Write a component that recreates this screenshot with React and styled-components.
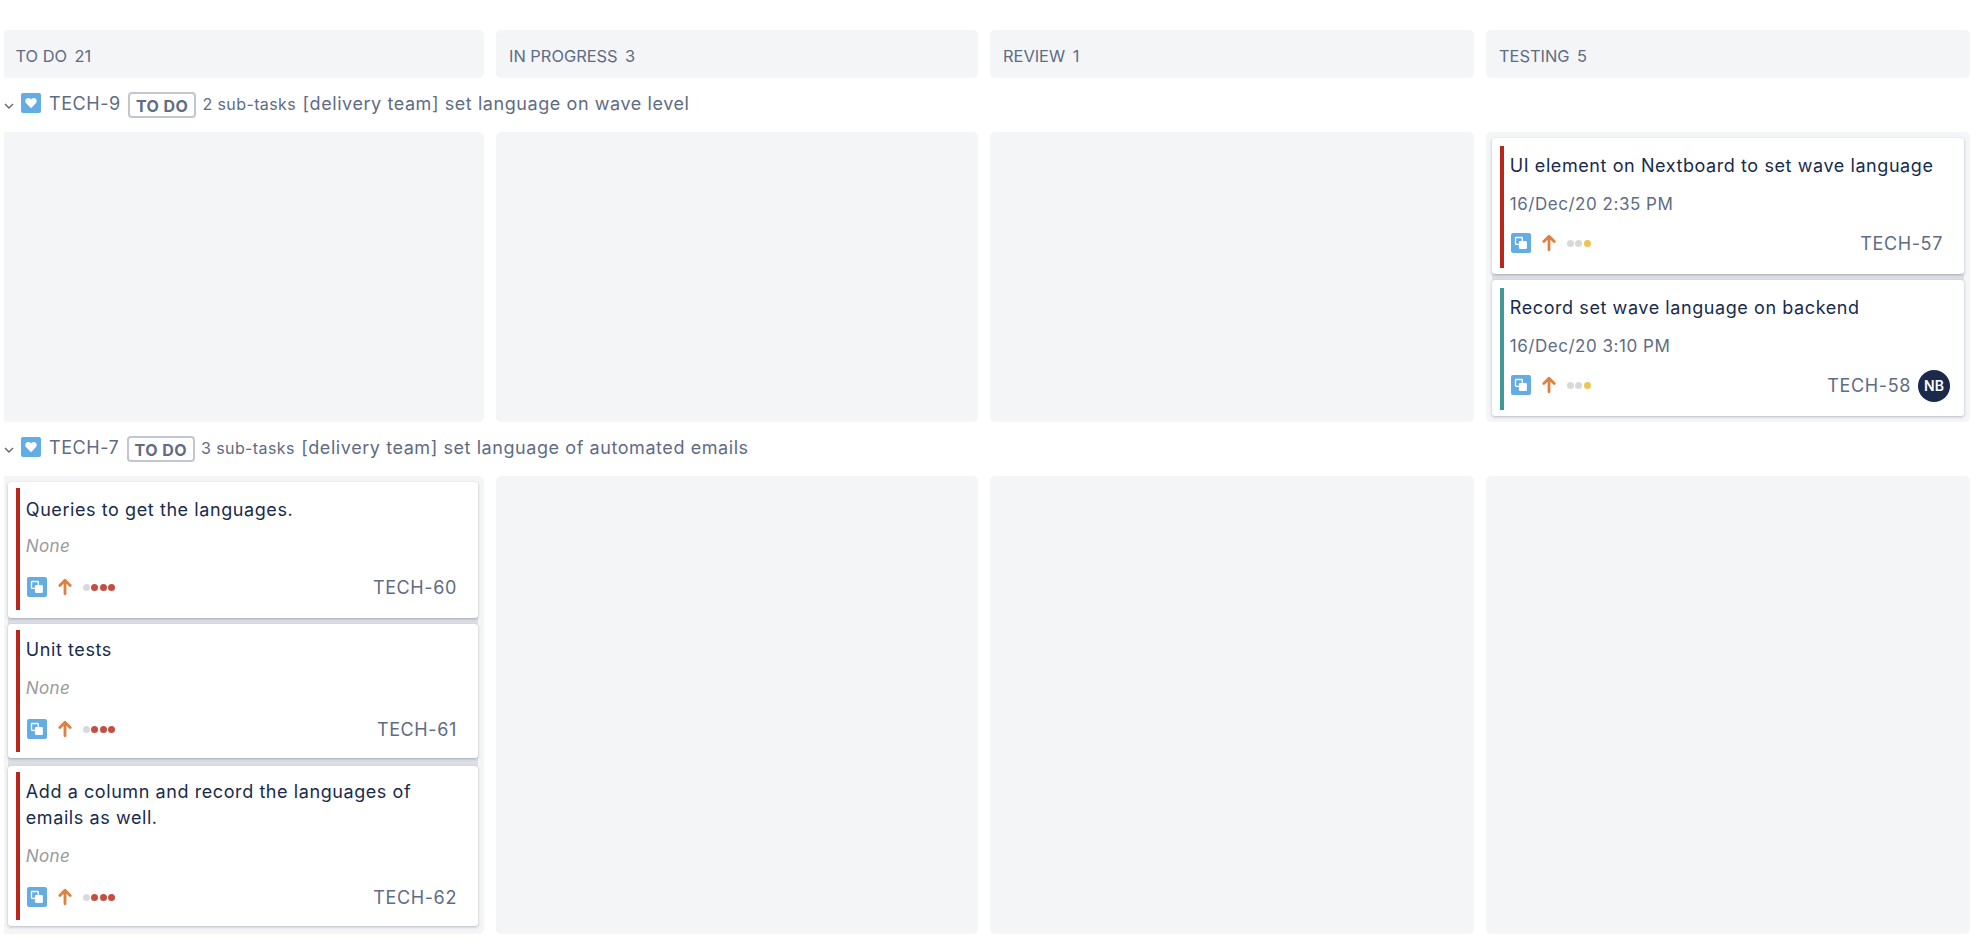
import styled, { createGlobalStyle } from "styled-components";

const GlobalStyle = createGlobalStyle`
    *{
        box-sizing:border-box;
    }
    body{
        margin:0;
        background-color:white;
        font-family:Inter, "Liberation Sans", sans-serif;
        color:#5e6c84;
    }
`;

const Board = styled.main`
    width:1982px;
    height:944px;
    padding:30px 12px 0 4px;
    overflow:hidden;
`;

const Columns = styled.div`
    display:grid;
    grid-template-columns:480px 482px 484px 484px;
    column-gap:12px;
`;

const ColumnHeader = styled.h2`
    display:flex;
    align-items:center;
    gap:7.5px;
    height:48px;
    margin:0;
    padding:4px 0 0 ${props => props.$first ? "11.5px" : "13px"};
    border-radius:${props => props.$first ? "2px 5px 5px 2px" : "5px"};
    background-color:#f4f5f7;
    font-size:16.4px;
    font-weight:400;
    line-height:20px;
`;

const Lane = styled.section`
    display:flex;
    flex-direction:column;
`;

const LaneHeader = styled.header`
    display:flex;
    align-items:center;
    height:54px;
    font-size:18px;
    line-height:26px;
`;

const Chevron = styled.svg`
    width:10px;
    height:6px;
    margin:2px 7px 0 0;
`;

const TypeIcon = styled.svg`
    width:20px;
    height:20px;
    flex-shrink:0;
`;

const LaneType = styled(TypeIcon)`
    margin:0 8px 4px 0;
`;

const LaneKey = styled.span`
    margin-bottom:2px;
    letter-spacing:.55px;
`;

const Status = styled.span`
    width:68px;
    height:26px;
    margin:0 6.5px 0 7.2px;
    padding-left:6px;
    border:2px solid #c1c7d0;
    border-radius:4px;
    font-size:16px;
    font-weight:700;
    line-height:24px;
    letter-spacing:.45px;
`;

const SubTasks = styled.span`
    margin:0 6.5px 2px 0;
    font-size:16px;
    letter-spacing:.4px;
`;

const LaneTitle = styled.span`
    margin-bottom:2px;
    letter-spacing:.57px;
`;

const Cell = styled.div`
    height:${props => props.$height}px;
    padding:6px 6px 0 ${props => props.$first ? "4px" : "6px"};
    border-radius:${props => props.$first ? "2px 5px 5px 2px" : "5px"};
    background-color:#f4f5f7;
`;

const CardList = styled.div`
    display:flex;
    flex-direction:column;
    border-radius:4px;
    background-color:#dddfe5;
`;

const Card = styled.article`
    display:flex;
    padding:${props => props.$top}px 14px ${props => props.$bottom}px 8px;
    border-radius:3px;
    background-color:white;
    box-shadow:0 1px 3px rgba(9, 30, 66, .28);
    &:not(:last-child) {
        margin-bottom:${props => props.$gap}px;
    }
`;

const Stripe = styled.div`
    width:4px;
    flex-shrink:0;
    background-color:${props => props.$color};
`;

const CardBody = styled.div`
    flex:1;
    padding:${props => props.$top}px 0 0 5.8px;
`;

const Summary = styled.h3`
    margin:0;
    color:#172b4d;
    font-size:18px;
    font-weight:400;
    line-height:26px;
    letter-spacing:.58px;
`;

const DateField = styled.div`
    margin-top:${props => props.$offset}px;
    font-size:17px;
    line-height:22px;
    letter-spacing:.53px;
    ${props => props.$empty && "color:#999; font-style:italic; letter-spacing:.4px;"}
`;

const CardFooter = styled.footer`
    display:flex;
    align-items:center;
    height:30px;
    margin:${props => props.$undated ? "15px 0 8px" : "13px 0 10px"};
    padding-left:1.2px;
`;

const Priority = styled.svg`
    width:14px;
    height:18px;
    margin:0 11.4px 0 11px;
`;

const Days = styled.div`
    display:flex;
    gap:1.1px;
`;

const Dot = styled.i`
    width:7px;
    height:7px;
    border-radius:50%;
    background-color:${props => props.$color};
`;

const CardKey = styled.span`
    margin:2px 7px 0 auto;
    font-size:18px;
    line-height:26px;
    letter-spacing:.62px;
`;

const Avatar = styled.span`
    width:32px;
    height:32px;
    margin-bottom:-2px;
    border-radius:50%;
    background-color:#1b2a4b;
    color:white;
    font-size:14px;
    font-weight:600;
    line-height:32px;
    text-align:center;
`;

const RED = "#bb261a";
const TEAL = "#429797";
const GREY_DOT = "#d9d9d9";
const YELLOW_DOT = "#efc456";
const RED_DOT = "#c44f40";

const columns = [
    { name: "TO DO", count: 21 },
    { name: "IN PROGRESS", count: 3 },
    { name: "REVIEW", count: 1 },
    { name: "TESTING", count: 5 },
];

const testingDots = [GREY_DOT, GREY_DOT, YELLOW_DOT];
const todoDots = [GREY_DOT, RED_DOT, RED_DOT, RED_DOT];

const lanes = [
    {
        id: "TECH-9",
        subTasks: 2,
        title: "[delivery team] set language on wave level",
        height: 290,
        cards: {
            TESTING: [
                { id: "TECH-57", summary: "UI element on Nextboard to set wave language", date: "16/Dec/20 2:35 PM", color: RED, dots: testingDots, top: 8, bottom: 6, bodyTop: 7, dateOffset: 14, gap: 6 },
                { id: "TECH-58", summary: "Record set wave language on backend", date: "16/Dec/20 3:10 PM", color: TEAL, dots: testingDots, top: 8, bottom: 6, bodyTop: 7, dateOffset: 14, gap: 6, avatar: "NB" },
            ],
        },
    },
    {
        id: "TECH-7",
        subTasks: 3,
        title: "[delivery team] set language of automated emails",
        height: 458,
        cards: {
            "TO DO": [
                { id: "TECH-60", summary: "Queries to get the languages.", color: RED, dots: todoDots, top: 6, bottom: 8, bodyTop: 9, dateOffset: 12, gap: 6 },
                { id: "TECH-61", summary: "Unit tests", color: RED, dots: todoDots, top: 6, bottom: 6, bodyTop: 7, dateOffset: 14, gap: 8 },
                { id: "TECH-62", summary: "Add a column and record the languages of emails as well.", color: RED, dots: todoDots, top: 6, bottom: 6, bodyTop: 7, dateOffset: 14, gap: 8 },
            ],
        },
    },
];

const StoryIcon = () => (
    <LaneType viewBox="0 0 20 20">
        <rect width="20" height="20" rx="2" fill="#63ade4" />
        <path d="M10 15.2 5.2 10.3C3.9 8.9 4 6.8 5.3 5.7 6.7 4.6 8.8 4.9 10 6.6c1.2-1.7 3.3-2 4.7-.9 1.3 1.1 1.4 3.2.1 4.6Z" fill="white" />
    </LaneType>
);

const SubTaskIcon = () => (
    <TypeIcon viewBox="0 0 20 20">
        <rect width="20" height="20" rx="2" fill="#63ade4" />
        <rect x="4.5" y="4.5" width="6.8" height="6.8" rx=".6" fill="none" stroke="white" strokeWidth="1.3" />
        <rect x="7.9" y="7.9" width="8" height="8" rx="1.2" fill="white" />
    </TypeIcon>
);

const TaskCard = ({ card }) => (
    <Card $top={card.top} $bottom={card.bottom} $gap={card.gap}>
        <Stripe $color={card.color} />
        <CardBody $top={card.bodyTop}>
            <Summary>{card.summary}</Summary>
            <DateField $empty={!card.date} $offset={card.dateOffset}>{card.date || "None"}</DateField>
            <CardFooter $undated={!card.date}>
                <SubTaskIcon />
                <Priority viewBox="0 0 14 18">
                    <path d="M7 15.8V2.8M1.8 7.5 7 2.3l5.2 5.2" fill="none" stroke="#de8040" strokeWidth="2.8" strokeLinecap="round" strokeLinejoin="round" />
                </Priority>
                <Days>
                    {card.dots.map((color, i) => <Dot key={i} $color={color} />)}
                </Days>
                <CardKey>{card.id}</CardKey>
                {card.avatar && <Avatar>{card.avatar}</Avatar>}
            </CardFooter>
        </CardBody>
    </Card>
);

const Swimlane = ({ lane }) => (
    <Lane>
        <LaneHeader>
            <Chevron viewBox="0 0 10 6">
                <path d="M1 1l4 4 4-4" fill="none" stroke="#666" strokeWidth="1.4" />
            </Chevron>
            <StoryIcon />
            <LaneKey>{lane.id}</LaneKey>
            <Status>TO DO</Status>
            <SubTasks>{lane.subTasks} sub-tasks</SubTasks>
            <LaneTitle>{lane.title}</LaneTitle>
        </LaneHeader>
        <Columns>
            {columns.map((column, i) => (
                <Cell key={column.name} $first={i === 0} $height={lane.height}>
                    {lane.cards[column.name] && (
                        <CardList>
                            {lane.cards[column.name].map(card => <TaskCard key={card.id} card={card} />)}
                        </CardList>
                    )}
                </Cell>
            ))}
        </Columns>
    </Lane>
);

export default function App() {
    return (
        <>
            <GlobalStyle />
            <Board>
                <Columns>
                    {columns.map((column, i) => (
                        <ColumnHeader key={column.name} $first={i === 0}>
                            <span>{column.name}</span>
                            <span>{column.count}</span>
                        </ColumnHeader>
                    ))}
                </Columns>
                {lanes.map(lane => <Swimlane key={lane.id} lane={lane} />)}
            </Board>
        </>
    );
}
